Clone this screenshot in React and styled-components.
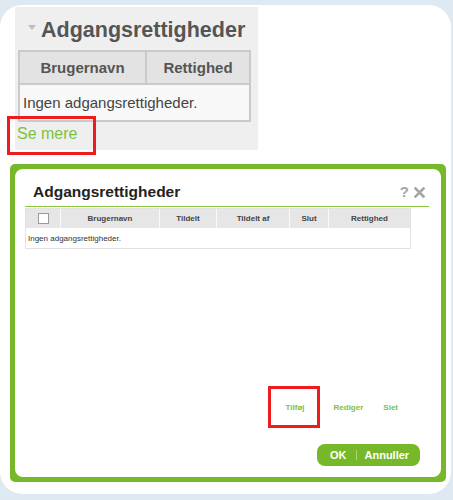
import React from "react";
import styled, { createGlobalStyle } from "styled-components";

const Global = createGlobalStyle`
  html, body { margin: 0; padding: 0; background: #dee9f2; }
  body { font-family: "Liberation Sans", Arial, sans-serif; }
`;

const Page = styled.div`
  width: 453px;
  height: 500px;
  box-sizing: border-box;
  padding: 5px 2px 6px 0;
  background: #dee9f2;
`;

const Card = styled.div`
  height: 100%;
  background: #ffffff;
  border-radius: 22px;
  display: flex;
  flex-direction: column;
  padding-top: 2px;
  box-sizing: border-box;
`;

const Panel = styled.section`
  margin-left: 15px;
  width: 243px;
  height: 143px;
  background: #efefef;
  padding: 0 7px 0 3px;
  box-sizing: border-box;
  display: flex;
  flex-direction: column;
`;

const PanelHead = styled.div`
  height: 43px;
  box-sizing: border-box;
  padding: 4px 0 0 10px;
  display: flex;
  align-items: center;
  gap: 5px;
`;

const Caret = styled.span`
  width: 0;
  height: 0;
  border-left: 4px solid transparent;
  border-right: 4px solid transparent;
  border-top: 5px solid #bdbdbd;
  margin-top: -6px;
`;

const PanelTitle = styled.h2`
  margin: 0;
  font-size: 21.5px;
  font-weight: bold;
  color: #555;
  white-space: nowrap;
`;

const SmallTable = styled.div`
  width: 233px;
  border: 2px solid #cacaca;
  box-sizing: border-box;
`;

const SmallHeadRow = styled.div`
  display: grid;
  grid-template-columns: 125px 1fr;
  height: 31px;
  background: #e3e3e3;
  border-bottom: 2px solid #cacaca;
`;

const SmallHeadCell = styled.div`
  display: flex;
  align-items: center;
  justify-content: center;
  font-size: 15px;
  font-weight: bold;
  color: #555;
  border-left: ${(p) => (p.$first ? "none" : "2px solid #cacaca")};
`;

const SmallBody = styled.div`
  height: 35px;
  background: #f8f8f8;
  display: flex;
  align-items: center;
  padding-left: 3px;
  font-size: 15px;
  color: #444;
`;

const MoreLink = styled.a`
  position: relative;
  align-self: flex-start;
  margin-top: 2px;
  margin-left: -1px;
  font-size: 16px;
  line-height: 19px;
  color: #7dc143;
  text-decoration: none;
`;

const Highlight = styled.span`
  position: absolute;
  top: ${(p) => p.$t}px;
  left: ${(p) => p.$l}px;
  right: ${(p) => p.$r}px;
  bottom: ${(p) => p.$b}px;
  border: 3px solid #ee1c1c;
  pointer-events: none;
`;

const Dialog = styled.div`
  margin: 14px 0 0 10px;
  width: 436px;
  height: 318px;
  background: #76b82a;
  border-radius: 5px;
  padding: 5px;
  box-sizing: border-box;
`;

const DialogInner = styled.div`
  height: 100%;
  background: #fff;
  border-radius: 8px;
  display: flex;
  flex-direction: column;
  padding: 0 12px 11px 10px;
  box-sizing: border-box;
`;

const TitleBar = styled.div`
  height: 38px;
  display: flex;
  align-items: flex-end;
  justify-content: space-between;
  padding: 0 4px 5px 8px;
  border-bottom: 1px solid #8cc63f;
  box-sizing: border-box;
`;

const DialogTitle = styled.h3`
  margin: 0;
  font-size: 15.5px;
  line-height: 18px;
  font-weight: bold;
  color: #222;
`;

const Tools = styled.div`
  display: flex;
  align-items: center;
  gap: 5px;
  font-size: 15px;
  line-height: 16px;
  font-weight: bold;
  color: #a6a6a6;
  margin-bottom: 1px;
`;

const CloseIcon = styled.svg`
  width: 11px;
  height: 11px;
  display: block;
`;

const Table = styled.div`
  margin-top: 1px;
  width: 386px;
  border: 1px solid #e2e2e2;
  box-sizing: border-box;
`;

const HeadRow = styled.div`
  display: grid;
  grid-template-columns: 34px 99px 57px 73px 39px 1fr;
  height: 19px;
  background: #e6e6e6;
`;

const HeadCell = styled.div`
  display: flex;
  align-items: center;
  justify-content: center;
  font-size: 8px;
  font-weight: bold;
  color: #444;
  border-left: ${(p) => (p.$first ? "none" : "1px solid #fafafa")};
`;

const Check = styled.span`
  width: 9px;
  height: 9px;
  border: 1px solid #9a9a9a;
  background: #fff;
`;

const BodyRow = styled.div`
  height: 20px;
  display: flex;
  align-items: center;
  padding-left: 2px;
  font-size: 8px;
  color: #333;
  background: #fff;
`;

const Spacer = styled.div`
  flex: 1;
`;

const Actions = styled.div`
  display: flex;
  justify-content: flex-end;
  padding-right: 31px;
  height: 10px;
`;

const ActionLink = styled.a`
  position: relative;
  margin-left: ${(p) => p.$gap || 0}px;
  font-size: 8px;
  line-height: 10px;
  font-weight: bold;
  color: #7dc143;
  text-decoration: none;
`;

const ButtonRow = styled.div`
  display: flex;
  justify-content: flex-end;
  margin-top: 31px;
  padding-right: 9px;
`;

const Button = styled.div`
  display: flex;
  align-items: center;
  height: 22px;
  width: 103px;
  box-sizing: border-box;
  padding-left: 13px;
  background: #76b82a;
  border-radius: 8px;
  color: #fff;
  font-size: 11px;
  font-weight: bold;
`;

const Sep = styled.span`
  width: 1px;
  height: 10px;
  background: #a9d774;
  margin: 0 8px 0 9px;
`;

export default function App() {
  return (
    <Page>
      <Global />
      <Card>
        <Panel>
          <PanelHead>
            <Caret />
            <PanelTitle>Adgangsrettigheder</PanelTitle>
          </PanelHead>
          <SmallTable>
            <SmallHeadRow>
              <SmallHeadCell $first>Brugernavn</SmallHeadCell>
              <SmallHeadCell>Rettighed</SmallHeadCell>
            </SmallHeadRow>
            <SmallBody>Ingen adgangsrettigheder.</SmallBody>
          </SmallTable>
          <MoreLink>
            Se mere
            <Highlight $t={-8} $l={-10} $r={-19} $b={-12} />
          </MoreLink>
        </Panel>
        <Dialog>
          <DialogInner>
            <TitleBar>
              <DialogTitle>Adgangsrettigheder</DialogTitle>
              <Tools>
                <span>?</span>
                <CloseIcon viewBox="0 0 11 11">
                  <path
                    d="M1.5 1.5 L9.5 9.5 M9.5 1.5 L1.5 9.5"
                    stroke="#a6a6a6"
                    strokeWidth="2.6"
                    strokeLinecap="square"
                  />
                </CloseIcon>
              </Tools>
            </TitleBar>
            <Table>
              <HeadRow>
                <HeadCell $first>
                  <Check />
                </HeadCell>
                <HeadCell>Brugernavn</HeadCell>
                <HeadCell>Tildelt</HeadCell>
                <HeadCell>Tildelt af</HeadCell>
                <HeadCell>Slut</HeadCell>
                <HeadCell>Rettighed</HeadCell>
              </HeadRow>
              <BodyRow>Ingen adgangsrettigheder.</BodyRow>
            </Table>
            <Spacer />
            <Actions>
              <ActionLink>
                Tilføj
                <Highlight $t={-17} $l={-18} $r={-15} $b={-15} />
              </ActionLink>
              <ActionLink $gap={29}>Rediger</ActionLink>
              <ActionLink $gap={20}>Slet</ActionLink>
            </Actions>
            <ButtonRow>
              <Button>
                OK
                <Sep />
                Annuller
              </Button>
            </ButtonRow>
          </DialogInner>
        </Dialog>
      </Card>
    </Page>
  );
}
